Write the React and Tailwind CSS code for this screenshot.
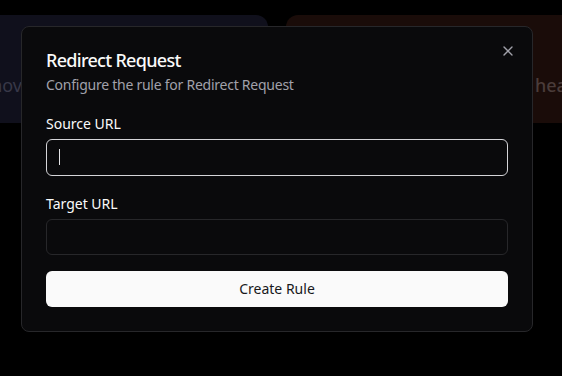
import React from "react";

function XIcon() {
  return (
    <svg viewBox="0 0 24 24" className="h-4 w-4" fill="none" stroke="currentColor" strokeWidth="2" strokeLinecap="round" strokeLinejoin="round">
      <path d="M18 6 6 18" />
      <path d="m6 6 12 12" />
    </svg>
  );
}

export default function App() {
  const font = { fontFamily: '"Noto Sans", "Open Sans", sans-serif' };
  return (
    <div className="relative h-[376px] w-[562px] overflow-hidden bg-black" style={font}>
      {/* background cards (dimmed by overlay) */}
      <div className="flex gap-[18px] pt-[15px] -ml-[60px]">
        <div className="flex h-[108px] w-[328px] shrink-0 items-start justify-end rounded-xl bg-[#10101c] pr-[246px] pt-[56px]">
          <span className="text-lg text-[#383848]">mov</span>
        </div>
        <div className="flex h-[108px] w-[320px] shrink-0 items-start rounded-xl bg-[#1a0c09] pl-[249px] pt-[56px]">
          <span className="text-lg font-medium text-[#4a3c3a]">heade</span>
        </div>
      </div>

      {/* dialog */}
      <div className="absolute left-[21px] top-[26px] w-[512px] rounded-lg border border-[#27272a] bg-[#0a0a0c] p-6">
        <button className="absolute right-4 top-4 text-[#a1a1aa]">
          <XIcon />
        </button>
        <h2 className="text-lg font-medium leading-none tracking-[-0.7px] text-[#fafafa]">Redirect Request</h2>
        <p className="mt-1.5 text-sm leading-5 tracking-[-0.25px] text-[#a1a1aa]">Configure the rule for Redirect Request</p>

        <div className="mt-[22px]">
          <label className="block text-sm font-normal leading-none text-[#fafafa]">Source URL</label>
          <div className="relative mt-2">
            <input className="h-[37px] w-full rounded-md border border-[#d4d4d8] bg-transparent px-3 text-sm text-white outline-none" />
            <span className="absolute left-[13px] top-[10px] h-[16px] w-px bg-[#e4e4e7]" />
          </div>
        </div>

        <div className="mt-[21px]">
          <label className="block text-sm font-normal leading-none text-[#fafafa]">Target URL</label>
          <input className="mt-2 h-9 w-full rounded-md border border-[#27272a] bg-transparent px-3 text-sm text-white outline-none" />
        </div>

        <button className="mt-4 flex h-9 w-full items-center justify-center rounded-md bg-[#fafafa] text-sm font-normal text-[#18181b]">
          Create Rule
        </button>
      </div>
    </div>
  );
}
